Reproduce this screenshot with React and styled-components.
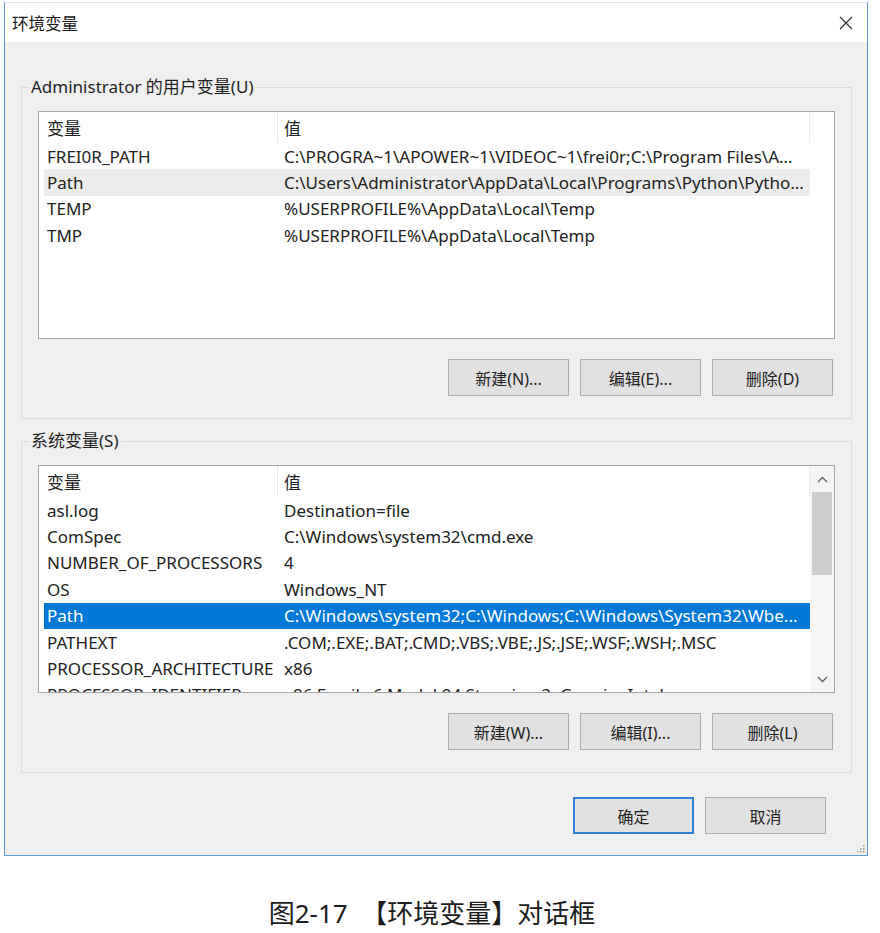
import React from 'react'
import styled, { createGlobalStyle } from 'styled-components'

const GlobalStyle = createGlobalStyle`
  body {
    margin: 0;
    background: #fff;
    font-family: "Noto Sans", "Noto Sans CJK SC", sans-serif;
    color: #222;
  }
`

const Page = styled.div`
  width: 880px;
  padding: 2px 0 0 4px;
  box-sizing: border-box;
`

const Window = styled.div`
  position: relative;
  width: 864px;
  box-sizing: border-box;
  border: 1px solid #5b9bd8;
  border-top-color: #d6e6f5;
`

const TitleBar = styled.div`
  height: 39px;
  background: #fff;
  display: flex;
  align-items: center;
  justify-content: space-between;
  padding: 0 14px 0 7px;
`

const Title = styled.span`
  font-size: 16.5px;
  color: #1a1a1a;
`

const Body = styled.div`
  background: #f0f0f0;
  padding: 34px 15px 21px 16px;
`

const Group = styled.fieldset`
  margin: ${(p) => p.$top}px 0 0 0;
  padding: 13px 16px 22px 16px;
  border: 1px solid #dcdcdc;
  min-width: 0;
`

const Legend = styled.legend`
  font-size: 17px;
  line-height: 22px;
  padding: 0 2px;
  margin-left: -9px;
  color: #1f1f1f;
`

const ListBox = styled.div`
  height: 228px;
  box-sizing: border-box;
  border: 1px solid #a5a5a5;
  background: #fff;
  display: flex;
  overflow: hidden;
`

const ListInner = styled.div`
  width: 766px;
  flex-shrink: 0;
  margin-left: 5px;
  font-size: 17px;
`

const Columns = styled.div`
  display: grid;
  grid-template-columns: 233px 1fr;
  align-items: center;
  white-space: nowrap;
`

const Header = styled(Columns)`
  height: 31px;
  border-right: 1px solid #ececec;
  box-sizing: border-box;
`

const Row = styled(Columns)`
  height: 26.4px;
  background: ${(p) =>
    p.$state === 'active' ? '#0078d7' : p.$state === 'soft' ? '#ececec' : 'transparent'};
  color: ${(p) => (p.$state === 'active' ? '#fff' : '#222')};
`

const Cell = styled.div`
  padding-left: 3px;
  overflow: hidden;
`

const ValueCell = styled.div`
  padding-left: 6px;
  border-left: 1px solid ${(p) => (p.$head ? '#e6e6e6' : 'transparent')};
  height: 100%;
  display: flex;
  align-items: center;
  overflow: hidden;
`

const ScrollBar = styled.div`
  margin-left: auto;
  width: 24px;
  background: #f5f5f5;
  display: flex;
  flex-direction: column;
  align-items: center;
`

const Arrow = styled.div`
  height: 26px;
  display: flex;
  align-items: center;
  justify-content: center;
`

const Track = styled.div`
  flex: 1;
  width: 100%;
  padding: 0 2px;
  box-sizing: border-box;
`

const Thumb = styled.div`
  height: 83px;
  background: #cdcdcd;
`

const ButtonRow = styled.div`
  display: flex;
  justify-content: flex-end;
  gap: 11px;
  margin-top: 20px;
  padding-right: ${(p) => p.$pad || 2}px;
`

const Button = styled.button`
  width: 121px;
  height: 37px;
  box-sizing: border-box;
  background: #e1e1e1;
  border: ${(p) => (p.$primary ? '2px solid #2f83d6' : '1px solid #adadad')};
  font-family: "Noto Sans", "Noto Sans CJK SC", sans-serif;
  font-size: 16px;
  color: #222;
  padding: 0;
`

const Footer = styled(ButtonRow)`
  margin-top: 24px;
`

const Grip = styled.svg`
  position: absolute;
  right: 2px;
  bottom: 2px;
`

const Caption = styled.div`
  margin-top: 41px;
  text-align: center;
  font-size: 26px;
  line-height: 32px;
  color: #1c1c1c;
  padding-right: 20px;
  white-space: pre;
`

const Chevron = ({ up }) => (
  <svg width="11" height="7" viewBox="0 0 11 7">
    <path
      d={up ? 'M1 6 L5.5 1.5 L10 6' : 'M1 1 L5.5 5.5 L10 1'}
      fill="none"
      stroke="#606060"
      strokeWidth="1.3"
    />
  </svg>
)

const userVars = [
  ['FREI0R_PATH', 'C:\\PROGRA~1\\APOWER~1\\VIDEOC~1\\frei0r;C:\\Program Files\\A...'],
  ['Path', 'C:\\Users\\Administrator\\AppData\\Local\\Programs\\Python\\Pytho...', 'soft'],
  ['TEMP', '%USERPROFILE%\\AppData\\Local\\Temp'],
  ['TMP', '%USERPROFILE%\\AppData\\Local\\Temp'],
]

const sysVars = [
  ['asl.log', 'Destination=file'],
  ['ComSpec', 'C:\\Windows\\system32\\cmd.exe'],
  ['NUMBER_OF_PROCESSORS', '4'],
  ['OS', 'Windows_NT'],
  ['Path', 'C:\\Windows\\system32;C:\\Windows;C:\\Windows\\System32\\Wbe...', 'active'],
  ['PATHEXT', '.COM;.EXE;.BAT;.CMD;.VBS;.VBE;.JS;.JSE;.WSF;.WSH;.MSC'],
  ['PROCESSOR_ARCHITECTURE', 'x86'],
  ['PROCESSOR_IDENTIFIER', 'x86 Family 6 Model 94 Stepping 3, GenuineIntel'],
]

const VarList = ({ rows, scroll }) => (
  <ListBox>
    <ListInner>
      <Header>
        <Cell>变量</Cell>
        <ValueCell $head>值</ValueCell>
      </Header>
      {rows.map(([name, value, state]) => (
        <Row key={name + value} $state={state}>
          <Cell>{name}</Cell>
          <ValueCell>{value}</ValueCell>
        </Row>
      ))}
    </ListInner>
    {scroll && (
      <ScrollBar>
        <Arrow>
          <Chevron up />
        </Arrow>
        <Track>
          <Thumb />
        </Track>
        <Arrow>
          <Chevron />
        </Arrow>
      </ScrollBar>
    )}
  </ListBox>
)

export default function App() {
  return (
    <Page>
      <GlobalStyle />
      <Window>
        <TitleBar>
          <Title>环境变量</Title>
          <svg width="14" height="14" viewBox="0 0 14 14">
            <path d="M1 1 L13 13 M13 1 L1 13" stroke="#333" strokeWidth="1.2" />
          </svg>
        </TitleBar>
        <Body>
          <Group $top={0}>
            <Legend>Administrator 的用户变量(U)</Legend>
            <VarList rows={userVars} />
            <ButtonRow>
              <Button>新建(N)...</Button>
              <Button>编辑(E)...</Button>
              <Button>删除(D)</Button>
            </ButtonRow>
          </Group>
          <Group $top={11}>
            <Legend>系统变量(S)</Legend>
            <VarList rows={sysVars} scroll />
            <ButtonRow>
              <Button>新建(W)...</Button>
              <Button>编辑(I)...</Button>
              <Button>删除(L)</Button>
            </ButtonRow>
          </Group>
          <Footer $pad={26}>
            <Button $primary>确定</Button>
            <Button>取消</Button>
          </Footer>
        </Body>
        <Grip width="10" height="10" viewBox="0 0 10 10">
          {[
            [8, 2],
            [8, 5],
            [5, 5],
            [8, 8],
            [5, 8],
            [2, 8],
          ].map(([x, y]) => (
            <rect key={`${x}-${y}`} x={x} y={y} width="1.5" height="1.5" fill="#a0a0a0" />
          ))}
        </Grip>
      </Window>
      <Caption>图2-17  【环境变量】对话框</Caption>
    </Page>
  )
}
